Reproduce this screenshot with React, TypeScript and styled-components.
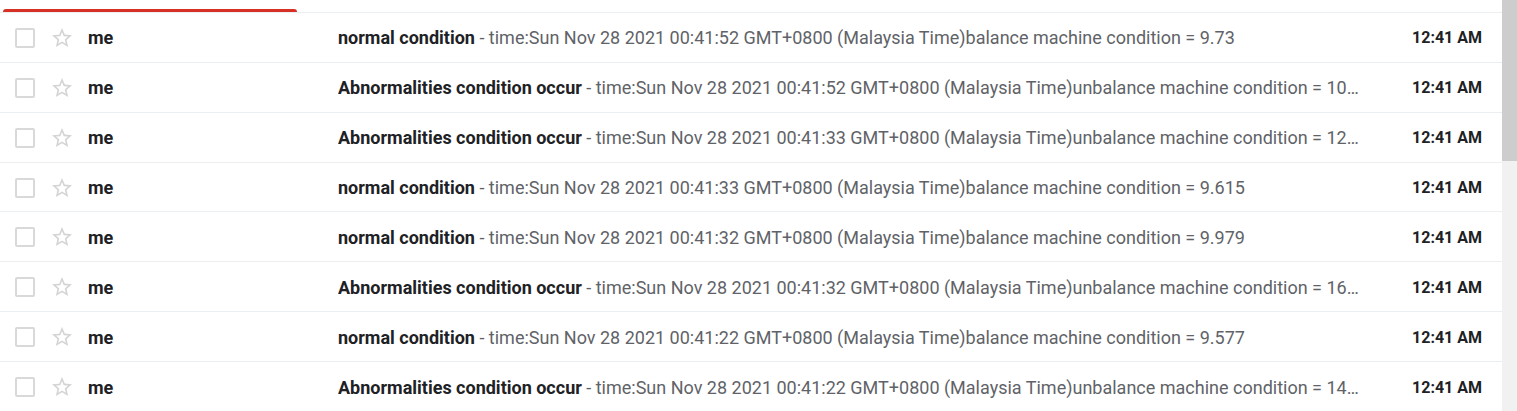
import React from "react";
import styled, { createGlobalStyle } from "styled-components";

const Global = createGlobalStyle`
  html, body { margin: 0; padding: 0; background: #fff; }
  body { font-family: Roboto, "Noto Sans", Arial, sans-serif; overflow: hidden; }
`;

const Page = styled.div`
  display: flex;
  width: 1517px;
  height: 411px;
  overflow: hidden;
`;

const Main = styled.div`
  flex: 1;
  min-width: 0;
  display: flex;
  flex-direction: column;
`;

const TabStrip = styled.div`
  height: 12px;
  display: flex;
  align-items: flex-end;
  padding-left: 3px;
`;

const ActiveTab = styled.div`
  width: 294px;
  height: 3px;
  background: #d93025;
  border-radius: 3px 3px 0 0;
`;

const Row = styled.div`
  display: flex;
  align-items: center;
  box-sizing: border-box;
  height: 50px;
  padding-top: 1px;
  border-top: 1px solid #eceff1;
  padding-left: 15px;
  padding-right: 20px;
  color: #202124;
`;

const Checkbox = styled.span`
  box-sizing: border-box;
  width: 20px;
  height: 20px;
  border: 2px solid #d9d9d9;
  border-radius: 2px;
  flex: none;
`;

const StarBox = styled.span`
  display: flex;
  align-items: center;
  justify-content: center;
  width: 24px;
  height: 24px;
  margin-left: 15px;
  flex: none;
`;

const Sender = styled.span`
  width: 250px;
  margin-left: 14px;
  flex: none;
  font-size: 18px;
  font-weight: 700;
  color: #202124;
`;

const Content = styled.span`
  flex: 1;
  min-width: 0;
  white-space: nowrap;
  overflow: hidden;
  text-overflow: ellipsis;
  font-size: 18px;
  color: #5f6368;
  padding-right: 40px;
`;

const Subject = styled.span`
  font-weight: 700;
  color: #202124;
`;

const Time = styled.span`
  flex: none;
  width: 80px;
  text-align: right;
  font-size: 16px;
  font-weight: 700;
  color: #202124;
`;

const Scrollbar = styled.div`
  width: 15px;
  flex: none;
  background: #f1f1f1;
  display: flex;
  flex-direction: column;
`;

const Thumb = styled.div`
  height: 161px;
  background: #cdcdcd;
`;

const Star = () => (
  <svg width="24" height="24" viewBox="0 0 24 24" fill="#d4d4d4">
    <path d="M22 9.24l-7.19-.62L12 2 9.19 8.63 2 9.24l5.46 4.73L5.82 21 12 17.27 18.18 21l-1.63-7.03L22 9.24zM12 15.4l-3.76 2.27 1-4.28-3.32-2.88 4.38-.38L12 6.1l1.71 4.04 4.38.38-3.32 2.88 1 4.28L12 15.4z" />
  </svg>
);

const rows = [
  { s: "normal condition", t: "00:41:52", b: "balance machine condition = 9.73" },
  { s: "Abnormalities condition occur", t: "00:41:52", b: "unbalance machine condition = 10.348" },
  { s: "Abnormalities condition occur", t: "00:41:33", b: "unbalance machine condition = 12.061" },
  { s: "normal condition", t: "00:41:33", b: "balance machine condition = 9.615" },
  { s: "normal condition", t: "00:41:32", b: "balance machine condition = 9.979" },
  { s: "Abnormalities condition occur", t: "00:41:32", b: "unbalance machine condition = 16.218" },
  { s: "normal condition", t: "00:41:22", b: "balance machine condition = 9.577" },
  { s: "Abnormalities condition occur", t: "00:41:22", b: "unbalance machine condition = 14.502" },
];

export default function App() {
  return (
    <>
      <Global />
      <Page>
        <Main>
          <TabStrip>
            <ActiveTab />
          </TabStrip>
          {rows.map((r, i) => (
            <Row key={i}>
              <Checkbox />
              <StarBox>
                <Star />
              </StarBox>
              <Sender>me</Sender>
              <Content>
                <Subject>{r.s}</Subject>
                {` - time:Sun Nov 28 2021 ${r.t} GMT+0800 (Malaysia Time)${r.b}`}
              </Content>
              <Time>12:41 AM</Time>
            </Row>
          ))}
        </Main>
        <Scrollbar>
          <Thumb />
        </Scrollbar>
      </Page>
    </>
  );
}
